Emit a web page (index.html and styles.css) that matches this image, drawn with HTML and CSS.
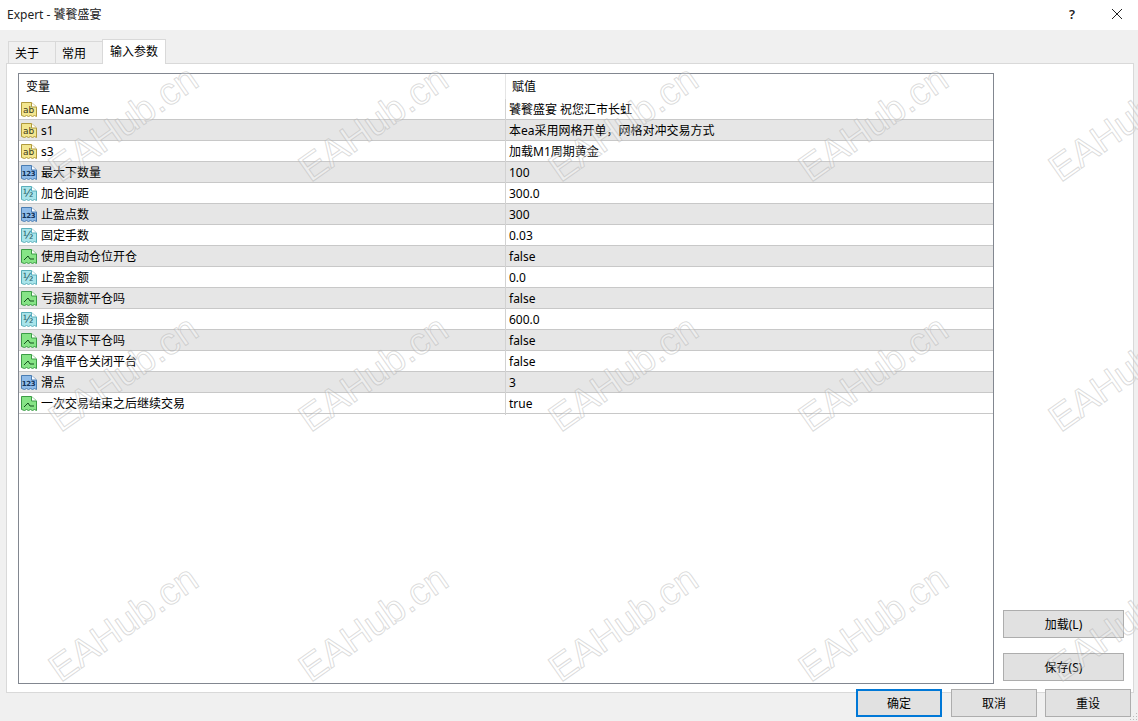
FILE: index.html
```html
<!DOCTYPE html>
<html lang="zh-CN">
<head>
<meta charset="utf-8">
<title>Expert - 饕餮盛宴</title>
<link rel="stylesheet" href="styles.css">
</head>
<body>
<svg class="defs" width="0" height="0" aria-hidden="true">
  <symbol id="page" viewBox="0 0 17 17">
    <path d="M1.5 1.5H11.5L16.5 6V15.5L14.5 14.5L12.5 15.5L10.5 14.5L8.5 15.5L6.5 14.5L4.5 15.5L1.5 14.5Z" fill="currentColor" stroke="var(--edge)"/>
    <path d="M11.5 1.5V6H16.5" fill="#fff" stroke="var(--edge)"/>
  </symbol>
</svg>
<div class="dialog">
  <header class="titlebar">
    <span class="title">Expert - 饕餮盛宴</span>
    <span class="help">?</span>
    <svg class="close" width="12" height="12" viewBox="0 0 12 12"><path d="M1 1L11 11M11 1L1 11" stroke="#222" fill="none"/></svg>
  </header>
  <main class="content">
    <nav class="tabs">
      <span class="tab">关于</span>
      <span class="tab">常用</span>
      <span class="tab active">输入参数</span>
    </nav>
    <section class="panel">
      <div class="table">
        <div class="row head"><span class="name">变量</span><span class="value">赋值</span></div>
        <div class="row"><span class="name"><svg class="icon str"><use href="#page"/><text x="8.5" y="12">ab</text></svg>EAName</span><span class="value">饕餮盛宴 祝您汇市长虹</span></div>
        <div class="row alt"><span class="name"><svg class="icon str"><use href="#page"/><text x="8.5" y="12">ab</text></svg>s1</span><span class="value">本ea采用网格开单，网格对冲交易方式</span></div>
        <div class="row"><span class="name"><svg class="icon str"><use href="#page"/><text x="8.5" y="12">ab</text></svg>s3</span><span class="value">加载M1周期黄金</span></div>
        <div class="row alt"><span class="name"><svg class="icon int"><use href="#page"/><text x="8.5" y="12">123</text></svg>最大下数量</span><span class="value">100</span></div>
        <div class="row"><span class="name"><svg class="icon dbl"><use href="#page"/><text x="8" y="12">½</text></svg>加仓间距</span><span class="value">300.0</span></div>
        <div class="row alt"><span class="name"><svg class="icon int"><use href="#page"/><text x="8.5" y="12">123</text></svg>止盈点数</span><span class="value">300</span></div>
        <div class="row"><span class="name"><svg class="icon dbl"><use href="#page"/><text x="8" y="12">½</text></svg>固定手数</span><span class="value">0.03</span></div>
        <div class="row alt"><span class="name"><svg class="icon bool"><use href="#page"/><path class="tick" d="M4 12L8 8L10 11H14"/></svg>使用自动仓位开仓</span><span class="value">false</span></div>
        <div class="row"><span class="name"><svg class="icon dbl"><use href="#page"/><text x="8" y="12">½</text></svg>止盈金额</span><span class="value">0.0</span></div>
        <div class="row alt"><span class="name"><svg class="icon bool"><use href="#page"/><path class="tick" d="M4 12L8 8L10 11H14"/></svg>亏损额就平仓吗</span><span class="value">false</span></div>
        <div class="row"><span class="name"><svg class="icon dbl"><use href="#page"/><text x="8" y="12">½</text></svg>止损金额</span><span class="value">600.0</span></div>
        <div class="row alt"><span class="name"><svg class="icon bool"><use href="#page"/><path class="tick" d="M4 12L8 8L10 11H14"/></svg>净值以下平仓吗</span><span class="value">false</span></div>
        <div class="row"><span class="name"><svg class="icon bool"><use href="#page"/><path class="tick" d="M4 12L8 8L10 11H14"/></svg>净值平仓关闭平台</span><span class="value">false</span></div>
        <div class="row alt"><span class="name"><svg class="icon int"><use href="#page"/><text x="8.5" y="12">123</text></svg>滑点</span><span class="value">3</span></div>
        <div class="row"><span class="name"><svg class="icon bool"><use href="#page"/><path class="tick" d="M4 12L8 8L10 11H14"/></svg>一次交易结束之后继续交易</span><span class="value">true</span></div>
      </div>
      <aside class="side">
        <button class="btn side-btn">加载(L)</button>
        <button class="btn side-btn">保存(S)</button>
      </aside>
    </section>
    <footer class="actions">
      <button class="btn act primary">确定</button>
      <button class="btn act">取消</button>
      <button class="btn act">重设</button>
    </footer>
  </main>
  <div class="watermarks" aria-hidden="true">
    <span>EAHub.cn</span><span>EAHub.cn</span><span>EAHub.cn</span><span>EAHub.cn</span><span>EAHub.cn</span>
    <span>EAHub.cn</span><span>EAHub.cn</span><span>EAHub.cn</span><span>EAHub.cn</span><span>EAHub.cn</span>
    <span>EAHub.cn</span><span>EAHub.cn</span><span>EAHub.cn</span><span>EAHub.cn</span><span>EAHub.cn</span>
  </div>
  <svg class="grip" width="10" height="10" viewBox="0 0 10 10"><path d="M8 2h1v1H8zM5 5h1v1H5zM8 5h1v1H8zM2 8h1v1H2zM5 8h1v1H5zM8 8h1v1H8z" fill="#bbb"/></svg>
</div>
</body>
</html>
```
FILE: styles.css
```css
* { box-sizing: border-box; }
html, body { margin: 0; padding: 0; }
body {
  font-family: "Noto Sans", "Noto Sans CJK SC", sans-serif;
  font-size: 12px;
  color: #000;
  background: #f0f0f0;
}
.defs { position: absolute; }
.dialog {
  position: relative;
  width: 1138px;
  height: 721px;
  overflow: hidden;
  display: flex;
  flex-direction: column;
}
.titlebar {
  height: 30px;
  flex: none;
  background: #fff;
  display: flex;
  align-items: center;
  padding: 0 15px 2px 7px;
  color: #222;
}
.title { flex: 1; }
.help { font-size: 13px; font-weight: 600; margin-right: 36px; }
.close { display: block; }
.content {
  flex: 1;
  display: flex;
  flex-direction: column;
  padding: 10px 4px 0 6px;
  min-height: 0;
}
.tabs {
  display: flex;
  height: 24px;
  padding-left: 3px;
  align-items: flex-end;
  flex: none;
  position: relative;
  z-index: 1;
  margin-bottom: -1px;
}
.tab {
  width: 48px;
  height: 22px;
  margin-bottom: 1px;
  border: 1px solid #d9d9d9;
  border-bottom: 0;
  margin-left: -1px;
  display: flex;
  align-items: center;
  padding: 0 0 0 6px;
  background: #f0f0f0;
}
.tab.active {
  width: 64px;
  height: 25px;
  margin-bottom: 0;
  background: #fff;
  padding: 0 0 3px 7px;
}
.panel {
  height: 630px;
  flex: none;
  background: #fff;
  border: 1px solid #d9d9d9;
  display: flex;
  padding: 9px 9px 8px 11px;
}
.table {
  width: 976px;
  flex: none;
  border: 1px solid #828790;
  background: #fff;
}
.row {
  display: grid;
  grid-template-columns: 487px 1fr;
  height: 21px;
  border-bottom: 1px solid #c8c8c8;
  align-items: stretch;
  line-height: 22px;
}
.row.head {
  height: 25px;
  border-bottom: 0;
  line-height: 26px;
}
.row.alt { background: #e6e6e6; }
.name {
  display: flex;
  align-items: flex-start;
  gap: 4px;
  padding-left: 1px;
  border-right: 1px solid #d2d2d2;
}
.value { padding-left: 3px; }
.head .name { padding-left: 7px; border-right-color: #e5e5e5; }
.head .value { padding-left: 6px; }
.icon {
  width: 17px;
  height: 17px;
  margin-top: 2px;
  flex: none;
  display: block;
  font-family: "DejaVu Sans", sans-serif;
}
.icon text {
  font-size: 9px;
  text-anchor: middle;
  fill: #3a3a20;
}
.icon.int text { font-size: 7px; font-weight: 700; fill: #12335a; letter-spacing: -0.3px; }
.icon.str { color: #f3e68f; --edge: #b09a3c; }
.icon.int { color: #8fbbe8; --edge: #4a7db2; }
.icon.dbl { color: #a8e4ea; --edge: #5aaeba; }
.icon.dbl text { font-size: 11px; fill: #1d5560; }
.icon.bool { color: #86e486; --edge: #3c9c46; }
.tick { fill: none; stroke: #14501e; stroke-width: 1; }
.side {
  flex: 1;
  display: flex;
  flex-direction: column;
  justify-content: flex-end;
  align-items: flex-end;
  gap: 15px;
  padding-bottom: 3px;
}
.btn {
  font: inherit;
  color: #000;
  background: #e1e1e1;
  border: 1px solid #adadad;
  padding: 0;
  border-radius: 0;
}
.side-btn { width: 121px; height: 28px; }
.actions {
  display: flex;
  justify-content: flex-end;
  gap: 8px;
  margin-top: -4px;
  padding-right: 3px;
  position: relative;
}
.act { width: 86px; height: 28px; }
.act.primary { border: 2px solid #0078d7; margin-right: 1px; }
.watermarks {
  position: absolute;
  left: 0;
  top: 0;
  display: grid;
  grid-template-columns: repeat(5, 250px);
  grid-auto-rows: 250px;
  pointer-events: none;
  padding: 30px 0 0 0;
}
.watermarks span {
  display: block;
  width: max-content;
  height: max-content;
  transform-origin: 0 100%;
  transform: translate(64px, 120px) rotate(-35deg);
  font-family: "Liberation Sans", sans-serif;
  font-size: 38px;
  line-height: 38px;
  color: rgba(255, 255, 255, 0.3);
  -webkit-text-stroke: 1px rgba(170, 170, 170, 0.42);
}
.grip {
  position: absolute;
  right: 0;
  bottom: 0;
}
```
